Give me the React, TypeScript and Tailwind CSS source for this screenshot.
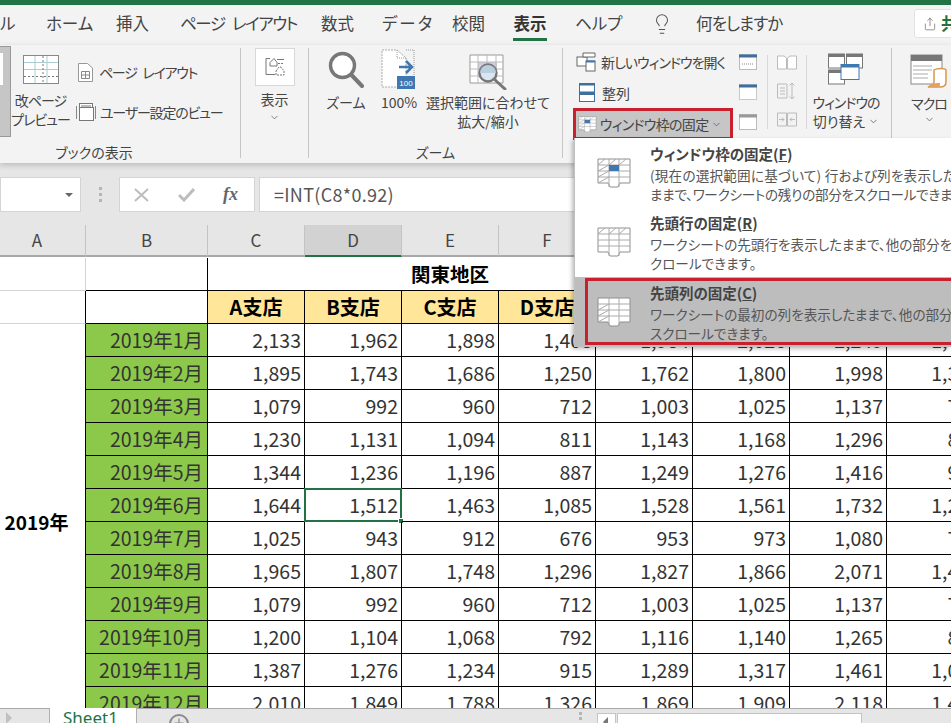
import { ChevronDown, Lightbulb, Plus, Share } from "lucide-react";

const FONT = "font-['Noto_Sans_CJK_JP','Noto_Sans',sans-serif]";
const PALT = "[font-feature-settings:'palt']";

const Chevron = () => <ChevronDown size={11} strokeWidth={1.6} className="text-[#555] shrink-0" />;

const PageBreakIcon = () => (
  <svg width="36" height="29" viewBox="0 0 36 29">
    <rect x=".5" y=".5" width="35" height="28" fill="#fff" stroke="#888" />
    <path d="M1 7.5H35M1 14.5H35M12 1V28M24 1V28" stroke="#a9cdd0" fill="none" />
    <path d="M1 21.5H35M20 1V28" stroke="#777" strokeDasharray="2 2" fill="none" />
  </svg>
);

const PageLayoutIcon = () => (
  <svg width="15" height="19" viewBox="0 0 15 19">
    <path d="M.5.5H9.5L14.5 5V18.5H.5Z" fill="#fff" stroke="#999" />
    <path d="M3.5 8.5H11.5V15.5H3.5ZM7.5 8.5V15.5M3.5 12H11.5" fill="none" stroke="#888" />
  </svg>
);

const CustomViewIcon = () => (
  <svg width="20" height="19" viewBox="0 0 20 19">
    <path d="M.5 3V16M19.5 3V16" stroke="#888" />
    <rect x="3.5" y=".5" width="13" height="13" fill="#fff" stroke="#777" />
    <rect x="3.5" y="4.5" width="14" height="13" fill="#fff" stroke="#777" />
    <path d="M5 3H15" stroke="#777" />
  </svg>
);

const ShowIcon = () => (
  <svg width="20" height="20" viewBox="0 0 20 20" fill="none" stroke="#777">
    <path d="M1 1.5H5M1 1.5V17.5H10" />
    <path d="M12 2.5H19" />
    <path d="M5 5.5L9 1.5L12 5.5V9H5Z" fill="#fff" />
    <path d="M11 14L14 10H16L19 14V18H11Z" fill="#fff" strokeDasharray="2 1" />
    <path d="M13 6.5H19" strokeDasharray="2 1" />
  </svg>
);

const ZoomIcon = () => (
  <svg width="36" height="38" viewBox="0 0 36 38" fill="none">
    <circle cx="14.5" cy="14.5" r="12" stroke="#777" strokeWidth="3.4" fill="#fff" />
    <path d="M23.5 24L34 35" stroke="#777" strokeWidth="4" strokeLinecap="round" />
  </svg>
);

const HundredIcon = () => (
  <svg width="36" height="40" viewBox="0 0 36 40">
    <path d="M1 1H16L25 9V38H1Z" fill="#fff" stroke="#aaa" strokeDasharray="2 1" />
    <path d="M16 1V9H25M25 1H33V28" fill="none" stroke="#999" strokeDasharray="1 1" />
    <path d="M18 18H31M25 12L31 18L25 24" fill="none" stroke="#3f78b0" strokeWidth="2.5" />
    <rect x="16" y="27" width="18" height="13" fill="#3f78b0" />
    <text x="25" y="37" fontSize="8" fontFamily="Liberation Sans" textAnchor="middle" fill="#fff">100</text>
  </svg>
);

const ZoomSelectionIcon = () => (
  <svg width="38" height="36" viewBox="0 0 38 36" fill="none">
    <path d="M1 1H34V29H1Z" fill="#fff" stroke="#999" />
    <rect x="9" y="8" width="19" height="14" fill="#cfcde0" />
    <path d="M1 8H34M1 15H34M1 22H34M9 1V29M18 1V29M27 1V29" stroke="#bbb" />
    <circle cx="19" cy="19" r="8.5" fill="#dbe5ee" stroke="#777" strokeWidth="2.4" />
    <path d="M11 19A8 8 0 0 1 27 19Z" fill="#b9cfe0" />
    <path d="M25 25L36 35" stroke="#777" strokeWidth="3" strokeLinecap="round" />
  </svg>
);

const NewWindowIcon = () => (
  <svg width="20" height="20" viewBox="0 0 20 20">
    <rect x="1" y="5" width="10" height="9" fill="#fff" stroke="#666" />
    <path d="M7 1H19V5H7Z" fill="#fff" stroke="#666" />
    <rect x="10" y="9" width="9" height="10" fill="#fff" stroke="#666" />
    <path d="M10 9.5H19" stroke="#3f78b0" strokeWidth="2" />
  </svg>
);

const ArrangeIcon = () => (
  <svg width="16" height="20" viewBox="0 0 16 20">
    <rect x=".5" y=".5" width="15" height="18" fill="#fff" stroke="#3f6f9f" />
    <path d="M0 1.5H16M0 9.5H16M0 11H16" stroke="#3f6f9f" strokeWidth="2" />
  </svg>
);

const FreezeIcon = ({ mode, size = 1 }: { mode: "pane" | "row" | "col"; size?: number }) => {
  const hatchTop = mode === "pane" || mode === "row";
  const hatchLeft = mode === "pane" || mode === "col";
  return (
    <svg width={34 * size} height={30 * size} viewBox="0 0 34 30" fill="none">
      <path d="M1 1H33V25H23L21 29H13L11 25H1Z" fill="#fff" stroke="#8f8f8f" />
      <path d="M1 7H33M1 13H33M1 19H33M12 1V29M22 1V29" stroke="#aaa" />
      {hatchTop && <path d="M1 7L8 1M12 7L19 1M22 7L29 1" stroke="#aaa" />}
      {hatchLeft && <path d="M1 13L12 7M1 19L12 13M1 25L12 19" stroke="#aaa" />}
      {mode === "pane" && <rect x="12" y="7" width="10" height="6" fill="#3f78b0" />}
    </svg>
  );
};

const MiniWindow = ({ top = "#3f6f9f", dots = false }: { top?: string; dots?: boolean }) => (
  <svg width="18" height="16" viewBox="0 0 18 16">
    <rect x=".5" y=".5" width="17" height="15" fill="#fff" stroke={dots ? "#999" : "#bbb"} strokeDasharray={dots ? "1 1" : undefined} />
    <path d="M0 2H18" stroke={top} strokeWidth="3" />
    {top !== "#999" && !dots && <path d="M3 10H15" stroke="#888" strokeDasharray="1 1" />}
  </svg>
);

const DisabledCompare = () => (
  <svg width="20" height="15" viewBox="0 0 20 15" fill="#fff" stroke="#bbb">
    <path d="M.5 1H7L9.5 3V14H.5Z" />
    <path d="M10.5 3L13 1H19.5V14H10.5Z" />
  </svg>
);

const DisabledSync = () => (
  <svg width="20" height="18" viewBox="0 0 20 18" fill="none" stroke="#bbb">
    <path d="M.5 2H10V16H.5ZM3 6H8M3 9H8M3 12H8" />
    <path d="M15 1V17M12.5 3.5L15 1L17.5 3.5M12.5 14.5L15 17L17.5 14.5" />
  </svg>
);

const DisabledReset = () => (
  <svg width="20" height="15" viewBox="0 0 20 15" fill="none" stroke="#bbb">
    <path d="M.5 1H9.5V14H.5ZM10.5 1H19.5V14H10.5Z" />
    <path d="M2 7.5H7M5 5.5L7 7.5L5 9.5M18 7.5H13M15 5.5L13 7.5L15 9.5" />
  </svg>
);

const SwitchWindowsIcon = () => (
  <svg width="36" height="32" viewBox="0 0 36 32">
    <rect x=".5" y="1" width="16" height="14" fill="#fff" stroke="#777" />
    <path d="M0 2.5H17" stroke="#777" strokeWidth="3" />
    <rect x="18.5" y="1" width="16" height="14" fill="#fff" stroke="#777" />
    <path d="M18 2.5H35" stroke="#777" strokeWidth="3" />
    <rect x=".5" y="17" width="16" height="14" fill="#fff" stroke="#777" />
    <path d="M0 18.5H17" stroke="#777" strokeWidth="3" />
    <rect x="13" y="11.5" width="18" height="15" fill="#fff" stroke="#3f78b0" />
    <path d="M13 13H31" stroke="#3f78b0" strokeWidth="3" />
  </svg>
);

const MacroIcon = () => (
  <svg width="38" height="34" viewBox="0 0 38 34">
    <rect x="1" y="1" width="31" height="29" fill="#fff" stroke="#888" />
    <rect x="1" y="1" width="31" height="6" fill="#777" />
    <path d="M3 12H22M3 16H22M3 20H18M3 24H18" stroke="#aaa" />
    <path d="M24 16C27 14 35 14 36 16V28C36 32 33 33 30 33H18C20 32 24 32 24 28Z" fill="#fff" stroke="#d9964d" strokeWidth="1.5" />
    <path d="M18 33C20 30 24 29 30 29C30 31 30 32 29 33Z" fill="#e0a163" />
  </svg>
);

const Sep = () => <div className="w-px self-stretch mt-[3px] mb-[5px] bg-[#c6c6c6] shrink-0" />;

const SmallSep = () => <div className="w-px h-[74px] bg-[#d8d8d8]" />;

const Tabs = () => (
  <div className={`h-[40px] pb-[3px] flex items-center text-[16.5px] text-[#444] whitespace-nowrap ${PALT}`}>
    <span className="w-[14px] shrink-0 text-right">ル</span>
    <span className="ml-[32px] w-[42px] shrink-0 text-center">ホーム</span>
    <span className="ml-[28px] w-[33px] shrink-0 text-center">挿入</span>
    <span className="ml-[31px] w-[111px] shrink-0 text-center tracking-[-1.4px] [word-spacing:5px]">ページ レイアウト</span>
    <span className="ml-[30px] w-[33px] shrink-0 text-center">数式</span>
    <span className="ml-[28px] w-[41px] shrink-0 text-center tracking-[2px]">データ</span>
    <span className="ml-[29px] w-[33px] shrink-0 text-center">校閲</span>
    <div className="ml-[28px] w-[34px] shrink-0 text-center relative font-bold text-[#333]">
      表示
      <div className="absolute left-0 right-0 bottom-[-5px] h-[3px] bg-[#217346]" />
    </div>
    <span className="ml-[28px] w-[40px] shrink-0 text-center">ヘルプ</span>
    <Lightbulb size={22} strokeWidth={1.1} className="ml-[36px] shrink-0 text-[#555]" />
    <span className="ml-[23px] w-[81px] shrink-0 tracking-[-0.9px]">何をしますか</span>
    <div className="ml-[137px] h-[29px] w-[60px] shrink-0 flex items-center gap-[4px] pl-[8px] bg-white rounded-[3px] border border-[#e2e2e2] font-bold text-[#217346]">
      <Share size={14} strokeWidth={1.2} className="text-[#666] shrink-0" />
      共有
    </div>
  </div>
);

const Ribbon = () => (
  <div className={`h-[118px] flex text-[14px] leading-[20px] text-[#444] ${PALT} shadow-[0_2px_6px_rgba(0,0,0,0.2)] relative whitespace-nowrap`}>
    {/* ブックの表示 */}
    <div className="w-[240px] shrink-0 flex flex-col">
      <div className="flex flex-1 pt-px min-h-0">
        <div className="w-[11px] h-[91px] bg-[#c6c6c6] border-r border-y border-[#999] pt-[6px]">
          <div className="w-[3px] h-[32px] bg-white" />
        </div>
        <div className="w-[59px] flex flex-col items-center">
          <div className="mt-[9px] mb-[7px]"><PageBreakIcon /></div>
          <div className="text-center leading-[19px] tracking-[-1px]">改ページ<br />プレビュー</div>
        </div>
        <div className="ml-[6px] pt-[16px] flex flex-col gap-[20px]">
          <div className="flex items-center h-[20px] pl-[2px]"><PageLayoutIcon /><span className="ml-[6px] tracking-[-1.3px] [word-spacing:4px]">ページ レイアウト</span></div>
          <div className="flex items-center h-[20px]"><CustomViewIcon /><span className="ml-[4px] tracking-[-1.2px]">ユーザー設定のビュー</span></div>
        </div>
      </div>
      <div className="h-[22px] pt-px text-center pr-[52px]">ブックの表示</div>
    </div>
    <Sep />
    {/* シートビュー */}
    <div className="w-[67px] shrink-0 flex flex-col items-center pt-[3px]">
      <div className="w-[40px] h-[38px] bg-white border border-[#d8d8d8] flex items-center justify-center"><ShowIcon /></div>
      <div className="mt-[3px]">表示</div>
      <div className="mt-[3px]"><Chevron /></div>
    </div>
    <Sep />
    {/* ズーム */}
    <div className="w-[253px] shrink-0 flex flex-col">
      <div className="flex flex-1 min-h-0">
        <div className="ml-[17px] w-[40px] flex flex-col items-center pt-[6px]">
          <ZoomIcon />
          <span className="mt-[3px]">ズーム</span>
        </div>
        <div className="ml-[13px] w-[40px] flex flex-col items-center pt-[4px]">
          <HundredIcon />
          <span className="mt-[3px]">100%</span>
        </div>
        <div className="ml-[7px] flex flex-col items-center pt-[9px] leading-[19px]">
          <ZoomSelectionIcon />
          <span className="mt-[3px]">選択範囲に合わせて</span>
          <span>拡大/縮小</span>
        </div>
      </div>
      <div className="h-[22px] pt-px text-center">ズーム</div>
    </div>
    <Sep />
    {/* ウィンドウ */}
    <div className="flex-1 flex min-w-0">
      <div className="ml-[10px] w-[160px] shrink-0 flex flex-col pt-[2px]">
        <div className="h-[30px] flex items-center pl-[3px]"><NewWindowIcon /><span className="ml-[5px] tracking-[-1px]">新しいウィンドウを開く</span></div>
        <div className="h-[31px] flex items-center pl-[6px]"><ArrangeIcon /><span className="ml-[7px]">整列</span></div>
        <div className="h-[32px] flex items-center pl-[2px] bg-[#c6c6c6] border-[3px] border-[#c8202c]">
          <FreezeIcon mode="pane" size={0.55} />
          <span className="ml-[3px] mr-[3px] tracking-[-0.7px]">ウィンドウ枠の固定</span>
          <Chevron />
        </div>
      </div>
      <div className="ml-[5px] w-[20px] pt-[9px] flex flex-col gap-[14px] items-center shrink-0">
        <MiniWindow />
        <MiniWindow dots />
        <MiniWindow top="#999" />
      </div>
      <div className="ml-[9px] pt-[10px] shrink-0"><SmallSep /></div>
      <div className="ml-[9px] w-[20px] pt-[10px] flex flex-col gap-[12px] items-center shrink-0">
        <DisabledCompare />
        <DisabledSync />
        <DisabledReset />
      </div>
      <div className="ml-[9px] pt-[10px] shrink-0"><SmallSep /></div>
      <div className="ml-[6px] w-[66px] shrink-0 flex flex-col items-center pt-[8px] leading-[19px]">
        <SwitchWindowsIcon />
        <span className="mt-[8px] tracking-[-1px]">ウィンドウの</span>
        <span className="flex items-center gap-[3px]">切り替え<Chevron /></span>
      </div>
      <div className="ml-[12px] shrink-0 w-px mt-[3px] bg-[#c6c6c6] h-[90px]" />
      <div className="ml-[17px] w-[40px] shrink-0 flex flex-col items-center pt-[9px]">
        <MacroIcon />
        <span className="mt-[5px] tracking-[-1px]">マクロ</span>
        <div className="mt-[1px]"><Chevron /></div>
      </div>
    </div>
  </div>
);

const FormulaBar = () => (
  <div className="h-[62px] flex items-center gap-[4px] bg-[#e6e6e6] text-[#555] pt-px">
    <div className="w-[81px] h-[35px] shrink-0 bg-white border border-[#d4d4d4] flex items-center justify-end pr-[7px]">
      <div className="w-0 h-0 border-x-[4px] border-x-transparent border-t-[4px] border-t-[#666]" />
    </div>
    <div className="w-[30px] shrink-0 flex flex-col items-center gap-[3px]">
      <div className="w-[3px] h-[3px] bg-[#b5b5b5]" />
      <div className="w-[3px] h-[3px] bg-[#b5b5b5]" />
      <div className="w-[3px] h-[3px] bg-[#b5b5b5]" />
    </div>
    <div className="w-[136px] h-[35px] bg-white border border-[#d4d4d4] flex items-center shrink-0">
      <svg className="ml-[14px]" width="15" height="14" viewBox="0 0 15 14" fill="none" stroke="#bdbdbd" strokeWidth="2"><path d="M1 1L14 13M14 1L1 13" /></svg>
      <svg className="ml-[29px]" width="17" height="14" viewBox="0 0 17 14" fill="none" stroke="#bdbdbd" strokeWidth="3"><path d="M1 7L6 12L16 1" /></svg>
      <span className="ml-[28px] font-['Liberation_Serif',serif] italic font-bold text-[18px] text-[#666]">fx</span>
    </div>
    <div className="flex-1 h-[35px] bg-white border border-[#d4d4d4] flex items-center pl-[14px] pb-px text-[18px] tracking-[0.3px]">=INT(C8*0.92)</div>
  </div>
);

const rows: [string, string[]][] = [
  ["2019年1月", ["2,133", "1,962", "1,898", "1,408", "1,984", "2,026", "2,249", "1,493"]],
  ["2019年2月", ["1,895", "1,743", "1,686", "1,250", "1,762", "1,800", "1,998", "1,326"]],
  ["2019年3月", ["1,079", "992", "960", "712", "1,003", "1,025", "1,137", "755"]],
  ["2019年4月", ["1,230", "1,131", "1,094", "811", "1,143", "1,168", "1,296", "861"]],
  ["2019年5月", ["1,344", "1,236", "1,196", "887", "1,249", "1,276", "1,416", "940"]],
  ["2019年6月", ["1,644", "1,512", "1,463", "1,085", "1,528", "1,561", "1,732", "1,250"]],
  ["2019年7月", ["1,025", "943", "912", "676", "953", "973", "1,080", "717"]],
  ["2019年8月", ["1,965", "1,807", "1,748", "1,296", "1,827", "1,866", "2,071", "1,475"]],
  ["2019年9月", ["1,079", "992", "960", "712", "1,003", "1,025", "1,137", "755"]],
  ["2019年10月", ["1,200", "1,104", "1,068", "792", "1,116", "1,140", "1,265", "840"]],
  ["2019年11月", ["1,387", "1,276", "1,234", "915", "1,289", "1,317", "1,461", "1,070"]],
  ["2019年12月", ["2,010", "1,849", "1,788", "1,326", "1,869", "1,909", "2,118", "1,407"]],
];

const branches = ["A支店", "B支店", "C支店", "D支店", "E支店", "F支店", "G支店", "H支店"];

const CELL = "border-r border-b border-black";

const Sheet = () => (
  <div className="flex-1 min-h-0 overflow-hidden bg-white">
    <div className="w-[984px] grid grid-cols-[86px_122px_repeat(8,97px)] auto-rows-[33px] text-[19.5px] leading-[24px] text-[#333]">
      {/* 列見出し */}
      {["A", "B", "C", "D", "E", "F", "G", "H", "I", "J"].map((c) => (
        <div
          key={c}
          className={`h-[32px] mb-[1px] text-[17px] flex items-center justify-center border-r border-[#c4c4c4] border-b-2 text-[#444] ${
            c === "D" ? "bg-[#d2d2d2] border-b-[#217346]" : "bg-[#e6e6e6] border-b-[#a8a8a8]"
          } ${c === "A" ? "pr-[11px]" : ""}`}
        >
          {c}
        </div>
      ))}
      {/* 1行目 */}
      <div className="border-r border-b border-[#d4d4d4]" />
      <div className="border-r border-r-black border-b border-b-black" />
      <div className={`${CELL} col-span-5 flex items-center justify-center font-bold text-black`}>関東地区</div>
      <div className={CELL} />
      <div className={CELL} />
      <div className={CELL} />
      {/* 2行目 */}
      <div className="border-r border-r-black border-b border-b-[#d4d4d4]" />
      <div className={CELL} />
      {branches.map((b) => (
        <div key={b} className={`${CELL} bg-[#ffe699] flex items-center justify-center font-bold text-[20px] text-black`}>{b}</div>
      ))}
      {/* 明細 */}
      <div className="row-span-12 border-r border-black flex items-center justify-center font-bold text-[19px] text-black pr-[12px]">2019年</div>
      {rows.map(([month, values]) => (
        <div key={month} className="contents">
          <div className={`${CELL} bg-[#8cc84a] flex items-center justify-end pr-[4px] pb-px`}>{month}</div>
          {values.map((v, i) => {
            const selected = month === "2019年6月" && i === 1;
            return (
              <div key={i} className={`${CELL} relative flex items-center justify-end pr-[3px] pb-px`}>
                {v}
                {selected && (
                  <div className="absolute left-[-1px] top-[-1px] right-[-1px] bottom-[-1px] border-2 border-[#217346]">
                    <div className="absolute right-[-4px] bottom-[-4px] w-[6px] h-[6px] bg-[#217346] border border-white" />
                  </div>
                )}
              </div>
            );
          })}
        </div>
      ))}
    </div>
  </div>
);

const Footer = () => (
  <div className="h-[15px] flex bg-[#e6e6e6] border-t border-[#a8a8a8] relative z-10">
    <div className="w-[50px] shrink-0 border-r border-[#b0b0b0] relative">
      <div className="absolute left-[6px] top-[3px] w-0 h-0 border-y-[6px] border-y-transparent border-l-[6px] border-l-[#c0c0c0]" />
    </div>
    <div className="w-[87px] shrink-0 h-[19px] bg-white text-[#217346] text-[17px] leading-[20px] pl-[13px] font-['Noto_Sans',sans-serif] mt-[-1px] border-r border-[#b0b0b0]">Sheet1</div>
    <div className="ml-[32px] mt-[5px] w-[20px] h-[20px] shrink-0 rounded-full border-2 border-[#8a8a8a] flex items-start justify-center">
      <Plus size={14} strokeWidth={2} className="text-[#8a8a8a]" />
    </div>
    <div className="ml-[390px] mt-[3px] shrink-0 flex flex-col gap-[2px]">
      <div className="w-[3px] h-[3px] bg-[#b5b5b5]" />
      <div className="w-[3px] h-[3px] bg-[#b5b5b5]" />
    </div>
    <div className="ml-[15px] mt-[4px] w-[19px] shrink-0 h-[20px] bg-white border border-[#c4c4c4] relative">
      <div className="absolute left-[5px] top-[3px] w-0 h-0 border-y-[5px] border-y-transparent border-r-[5px] border-r-[#777]" />
    </div>
    <div className="ml-px mt-[4px] w-[245px] shrink-0 h-[20px] bg-white border border-[#c4c4c4]" />
  </div>
);

const menuItems = [
  {
    mode: "pane" as const,
    title: "ウィンドウ枠の固定(",
    key: "F",
    lines: ["(現在の選択範囲に基づいて) 行および列を表示した", "ままで、ワークシートの残りの部分をスクロールできます。"],
    tracking: ["tracking-[0.2px]", "tracking-[-0.3px]"],
  },
  {
    mode: "row" as const,
    title: "先頭行の固定(",
    key: "R",
    lines: ["ワークシートの先頭行を表示したままで、他の部分をス", "クロールできます。"],
    tracking: ["", ""],
  },
  {
    mode: "col" as const,
    title: "先頭列の固定(",
    key: "C",
    lines: ["ワークシートの最初の列を表示したままで、他の部分が", "スクロールできます。"],
    tracking: ["", ""],
  },
];

const FreezeMenu = () => (
  <div className={`absolute left-[574px] top-[138px] w-[377px] h-[209px] z-20 bg-white border-l border-b border-[#c0c0c0] shadow-[-2px_2px_4px_rgba(0,0,0,0.25)] flex flex-col text-[13.6px] leading-[19px] text-[#555] ${PALT} overflow-hidden`}>
    {menuItems.map((item) => {
      const active = item.mode === "col";
      return (
        <div key={item.mode} className={`h-[70px] flex relative ${active ? "bg-[#bdbdbd]" : ""}`}>
          <div className="w-[75px] shrink-0 flex justify-center pt-[20px] pl-[3px]">
            <FreezeIcon mode={item.mode} />
          </div>
          <div className="whitespace-nowrap pt-[6px]">
            <div className="font-bold text-[#444] text-[14.5px] leading-[20px] mb-[2px]">
              {item.title}<span className="underline">{item.key}</span>)
            </div>
            {item.lines.map((l, i) => (
              <div key={l} className={item.tracking[i]}>{l}</div>
            ))}
          </div>
          {active && <div className="absolute left-[10px] top-[1px] w-[380px] bottom-[1px] border-[3px] border-[#c8202c]" />}
        </div>
      );
    })}
  </div>
);

export default function App() {
  return (
    <div className={`w-[951px] h-[723px] overflow-hidden relative flex flex-col bg-[#f3f3f3] ${FONT}`}>
      <div className="h-[5px] shrink-0 bg-[#217346]" />
      <Tabs />
      <Ribbon />
      <FormulaBar />
      <Sheet />
      <Footer />
      <FreezeMenu />
    </div>
  );
}
